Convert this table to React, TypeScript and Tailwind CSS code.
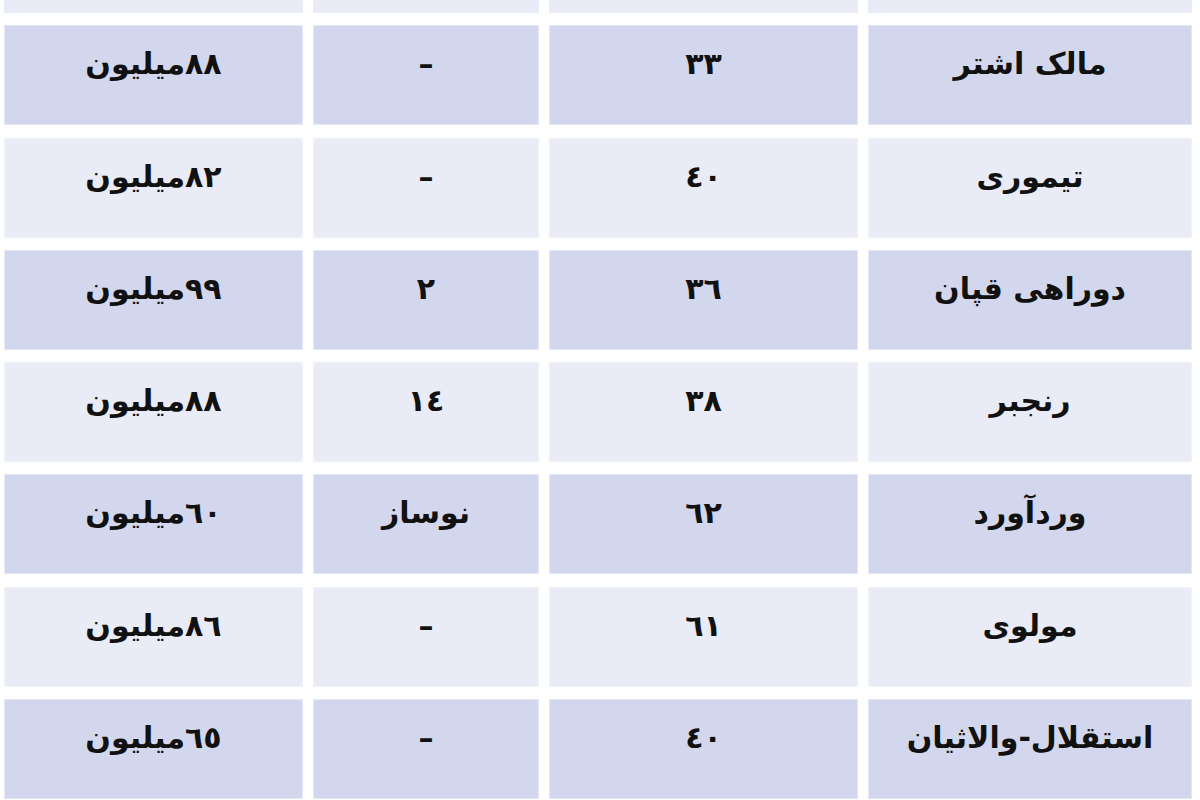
import React from "react";

type Row = {
  name: string;
  age: string;
  floor: string;
  price: string;
};

const rows: Row[] = [
  { name: "مالک اشتر", age: "٣٣", floor: "–", price: "٨٨میلیون" },
  { name: "تیموری", age: "٤٠", floor: "–", price: "٨٢میلیون" },
  { name: "دوراهی قپان", age: "٣٦", floor: "٢", price: "٩٩میلیون" },
  { name: "رنجبر", age: "٣٨", floor: "١٤", price: "٨٨میلیون" },
  { name: "وردآورد", age: "٦٢", floor: "نوساز", price: "٦٠میلیون" },
  { name: "مولوی", age: "٦١", floor: "–", price: "٨٦میلیون" },
  { name: "استقلال-والاثیان", age: "٤٠", floor: "–", price: "٦٥میلیون" },
];

function Cell({ text, dark }: { text: string; dark: boolean }) {
  return (
    <div
      className={`h-[100px] flex items-center justify-center pb-[22px] border border-white/40 ${
        dark ? "bg-[#d3d7ed]" : "bg-[#e9ebf6]"
      }`}
    >
      <span className="text-[30px] font-bold leading-none text-[#111]">
        {text}
      </span>
    </div>
  );
}

export default function App() {
  return (
    <div
      dir="rtl"
      className="w-[1200px] h-[800px] overflow-hidden bg-white pl-[4px] pr-[8px]"
      style={{ fontFamily: '"DejaVu Sans", sans-serif' }}
    >
      <div className="grid grid-cols-[324px_309px_226px_299px] gap-x-[10px] gap-y-[12.3px]">
        {/* bottom edge of the row above */}
        <div className="h-[13px] bg-[#e9ebf6]" />
        <div className="h-[13px] bg-[#e9ebf6]" />
        <div className="h-[13px] bg-[#e9ebf6]" />
        <div className="h-[13px] bg-[#e9ebf6]" />

        {rows.map((r, i) => {
          const dark = i % 2 === 0;
          return (
            <React.Fragment key={r.name}>
              <Cell text={r.name} dark={dark} />
              <Cell text={r.age} dark={dark} />
              <Cell text={r.floor} dark={dark} />
              <Cell text={r.price} dark={dark} />
            </React.Fragment>
          );
        })}
      </div>
    </div>
  );
}
